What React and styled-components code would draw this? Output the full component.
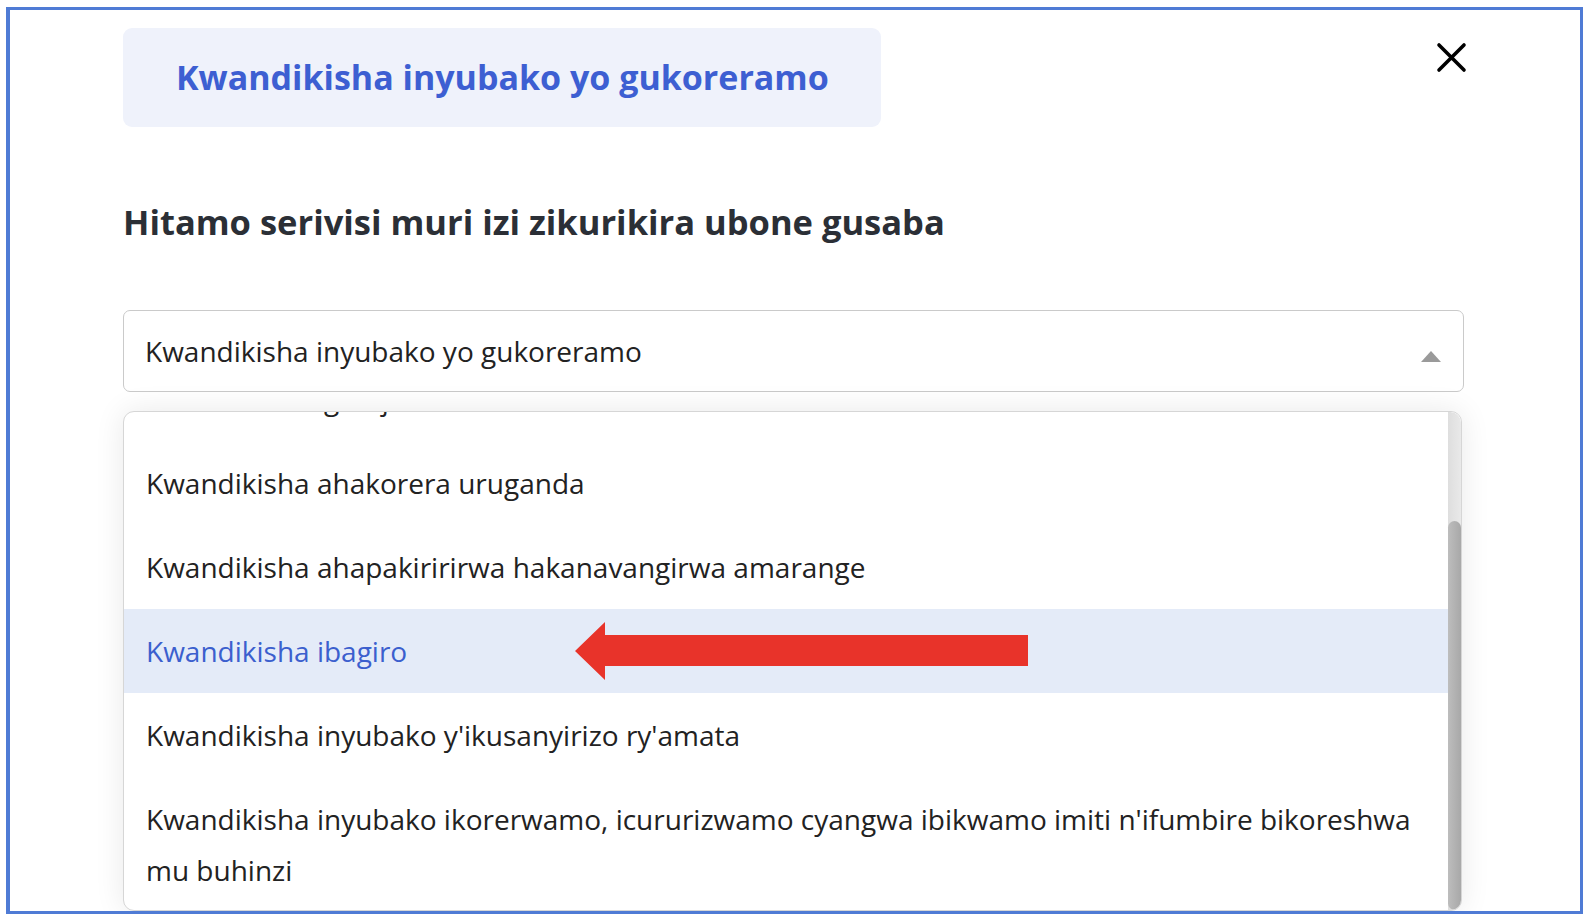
import React, { useLayoutEffect, useRef } from "react";
import styled, { createGlobalStyle } from "styled-components";

const GlobalStyle = createGlobalStyle`
  html, body {
    margin: 0;
    padding: 0;
    background: #ffffff;
  }
  body {
    padding: 7px 11px 8px 6px;
    font-family: "Open Sans", "Lato", sans-serif;
  }
`;

const Frame = styled.div`
  border: 3px solid #4f7bd5;
  border-left-width: 4px;
  padding: 18px 116px 0 113px;
  background: #ffffff;
  overflow: hidden;
`;

const Header = styled.div`
  display: flex;
  align-items: flex-start;
  justify-content: space-between;
`;

const TitleBox = styled.div`
  height: 99px;
  display: flex;
  align-items: center;
  padding: 0 52px 0 53px;
  background: #eff2fb;
  border-radius: 9px;
`;

const Title = styled.h1`
  margin: 0 0 2px;
  font-size: 34px;
  font-weight: 700;
  color: #3d5fd2;
  white-space: nowrap;
`;

const CloseButton = styled.button`
  border: none;
  background: none;
  padding: 0;
  margin: 14px -3px 0 0;
  width: 31px;
  height: 31px;
  cursor: pointer;
  svg {
    display: block;
  }
`;

const Heading = styled.h2`
  margin: 73px 0 0;
  font-size: 34.5px;
  line-height: 44px;
  font-weight: 700;
  color: #2b2f36;
`;

const SelectBox = styled.div`
  margin-top: 66px;
  height: 82px;
  box-sizing: border-box;
  border: 1.5px solid #cacaca;
  border-radius: 7px;
  display: flex;
  align-items: center;
  justify-content: space-between;
  padding: 0 22px 0 21px;
  font-size: 28px;
  color: #222;
`;

const Caret = styled.span`
  width: 0;
  height: 0;
  border-left: 10px solid transparent;
  border-right: 10px solid transparent;
  border-bottom: 11px solid #9a9a9a;
  margin-top: 10px;
`;

const Menu = styled.div`
  margin: 19px 2px 0 0;
  height: 500px;
  box-sizing: border-box;
  border: 1px solid #d6d6d6;
  border-radius: 11px;
  box-shadow: 0 0 30px rgba(0, 0, 0, 0.09);
  background: #fff;
  display: flex;
  overflow: hidden;
`;

const Viewport = styled.div`
  flex: 1;
  overflow: hidden;
`;

const ScrollTrack = styled.div`
  width: 13px;
  flex-shrink: 0;
  background: linear-gradient(to right, #dedede, #e9e9e9);
  border-top-right-radius: 11px;
  display: flex;
  flex-direction: column;
`;

const ScrollThumb = styled.div`
  margin-top: 109px;
  flex: 1;
  background: linear-gradient(to right, #bdbdbd, #a8a8a8);
  border-radius: 7px;
`;

const List = styled.ul`
  list-style: none;
  margin: 0;
  padding: 4px 0;
`;

const Item = styled.li`
  position: relative;
  padding: 16.5px 22px;
  font-size: 28px;
  line-height: 51px;
  color: ${(p) => (p.$active ? "#3b5fce" : "#222222")};
  background: ${(p) => (p.$active ? "#e4ebf8" : "transparent")};
`;

const Arrow = styled.svg`
  position: absolute;
  left: 451px;
  top: 13px;
`;

const items = [
  "Kwandikisha inyubako yo gukoreramo",
  "Kwandikisha igaraje",
  "Kwandikisha ahakorera uruganda",
  "Kwandikisha ahapakiririrwa hakanavangirwa amarange",
  "Kwandikisha ibagiro",
  "Kwandikisha inyubako y'ikusanyirizo ry'amata",
  "Kwandikisha inyubako ikorerwamo, icururizwamo cyangwa ibikwamo imiti n'ifumbire bikoreshwa mu buhinzi",
];

const App = () => {
  const viewportRef = useRef(null);

  useLayoutEffect(() => {
    if (viewportRef.current) viewportRef.current.scrollTop = 143;
  }, []);

  return (
    <>
      <GlobalStyle />
      <Frame>
        <Header>
          <TitleBox>
            <Title>Kwandikisha inyubako yo gukoreramo</Title>
          </TitleBox>
          <CloseButton aria-label="Funga">
            <svg width="31" height="31" viewBox="0 0 31 31">
              <path
                d="M3 3 L28 28 M28 3 L3 28"
                stroke="#000"
                strokeWidth="3.6"
                strokeLinecap="round"
              />
            </svg>
          </CloseButton>
        </Header>

        <Heading>Hitamo serivisi muri izi zikurikira ubone gusaba</Heading>

        <SelectBox>
          <span>Kwandikisha inyubako yo gukoreramo</span>
          <Caret />
        </SelectBox>

        <Menu>
          <Viewport ref={viewportRef}>
            <List>
              {items.map((label) => {
                const active = label === "Kwandikisha ibagiro";
                return (
                  <Item key={label} $active={active}>
                    {label}
                    {active && (
                      <Arrow width="453" height="58" viewBox="0 0 453 58">
                        <polygon
                          points="0,29 30,0 30,13 453,13 453,44 30,44 30,58"
                          fill="#e8332a"
                        />
                      </Arrow>
                    )}
                  </Item>
                );
              })}
            </List>
          </Viewport>
          <ScrollTrack>
            <ScrollThumb />
          </ScrollTrack>
        </Menu>
      </Frame>
    </>
  );
};

export default App;
